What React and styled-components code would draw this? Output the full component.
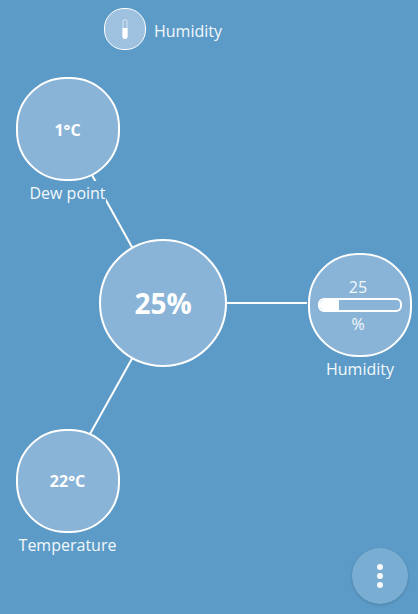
import React from "react";
import styled, { createGlobalStyle } from "styled-components";

const GlobalStyle = createGlobalStyle`
  * { box-sizing: border-box; }
  body {
    margin: 0;
    background: #5c9bc7;
    color: #fff;
    font-family: "Open Sans", sans-serif;
    font-size: 16px;
    overflow: hidden;
  }
`;

const Page = styled.main`
  position: relative;
  display: flex;
  flex-direction: column;
  width: 418px;
  height: 614px;
  background: #5c9bc7;
`;

const Header = styled.header`
  display: flex;
  align-items: center;
  gap: 8px;
  height: 58px;
  padding-left: 104px;
`;

const HeaderIcon = styled.div`
  width: 42px;
  height: 42px;
  border: 1px solid #fff;
  border-radius: 20px;
  background: #9dc1de;

  svg { display: block; }
`;

const Title = styled.h1`
  margin: 4px 0 0;
  font-size: 16px;
  font-weight: 400;
  line-height: 22px;
  color: #f3f8fb;
`;

const Canvas = styled.section`
  position: relative;
  flex: 1;
`;

const Links = styled.svg`
  position: absolute;
  inset: 0;
  width: 418px;
  height: 556px;
  stroke: #fff;
  stroke-width: 2;
`;

const Node = styled.div`
  position: absolute;
  left: ${(p) => p.$x}px;
  top: ${(p) => p.$y}px;
  display: flex;
  flex-direction: column;
  align-items: center;
  width: ${(p) => p.$size || 104}px;
`;

const Circle = styled.div`
  display: flex;
  flex-direction: column;
  align-items: center;
  justify-content: center;
  width: 100%;
  height: ${(p) => (p.$large ? 128 : 104)}px;
  border: 2px solid #fff;
  border-radius: ${(p) => (p.$large ? 64 : 50)}px;
  background: #8ab4d7;
  font-size: ${(p) => (p.$large ? 28 : 16)}px;
  font-weight: ${(p) => (p.$gauge ? 400 : 700)};
  line-height: 22px;
`;

const Value = styled.span`
  padding: ${(p) => p.$drop || 0}px 1px 0 0;
`;

const Label = styled.div`
  height: 24px;
  margin-right: ${(p) => p.$shift || 0}px;
  background: #5c9bc7;
  color: #f3f8fb;
  line-height: 24px;
  white-space: nowrap;
`;

const Gauge = styled.div`
  width: 84px;
  height: 14px;
  border: 2px solid #fff;
  border-radius: 6px;
  overflow: hidden;
`;

const GaugeFill = styled.div`
  width: ${(p) => p.$value}%;
  height: 100%;
  background: #fff;
`;

const Reading = styled.span`
  height: 22px;
  margin-top: ${(p) => p.$top || 0}px;
  margin-right: 4px;
  color: #f3f8fb;
`;

const MenuButton = styled.button`
  position: absolute;
  left: 352px;
  top: 548px;
  display: flex;
  flex-direction: column;
  align-items: center;
  justify-content: center;
  gap: 3px;
  width: 56px;
  height: 56px;
  padding: 0;
  border: 0;
  border-radius: 50%;
  background: #7aadd2;
  box-shadow: 0 1px 3px rgba(0, 0, 0, 0.18);
`;

const Dot = styled.span`
  width: 6px;
  height: 6px;
  border-radius: 50%;
  background: #f7fafd;
`;

export default function App() {
  return (
    <>
      <GlobalStyle />
      <Page>
        <Header>
          <HeaderIcon>
            <svg width="40" height="40" viewBox="0 0 40 40" fill="none">
              <rect x="18" y="10.5" width="4" height="19" rx="2" stroke="#fff" strokeOpacity="0.6" />
              <path d="M17.5 19h5v8.5a2.5 2.5 0 0 1-5 0z" fill="#fff" />
            </svg>
          </HeaderIcon>
          <Title>Humidity</Title>
        </Header>
        <Canvas>
          <Links>
            <line x1="163" y1="245" x2="67" y2="72" />
            <line x1="163" y1="245" x2="307" y2="245" />
            <line x1="163" y1="245" x2="66" y2="419" />
          </Links>
          <Node $x={16} $y={19}>
            <Circle><Value $drop={1}>1°C</Value></Circle>
            <Label $shift={1}>Dew point</Label>
          </Node>
          <Node $x={99} $y={181} $size={128}>
            <Circle $large>25%</Circle>
          </Node>
          <Node $x={308} $y={195}>
            <Circle $gauge>
              <Reading>25</Reading>
              <Gauge>
                <GaugeFill $value={24} />
              </Gauge>
              <Reading $top={1}>%</Reading>
            </Circle>
            <Label>Humidity</Label>
          </Node>
          <Node $x={16} $y={371}>
            <Circle><Value>22°C</Value></Circle>
            <Label $shift={1}>Temperature</Label>
          </Node>
        </Canvas>
        <MenuButton aria-label="Menu">
          <Dot />
          <Dot />
          <Dot />
        </MenuButton>
      </Page>
    </>
  );
}
